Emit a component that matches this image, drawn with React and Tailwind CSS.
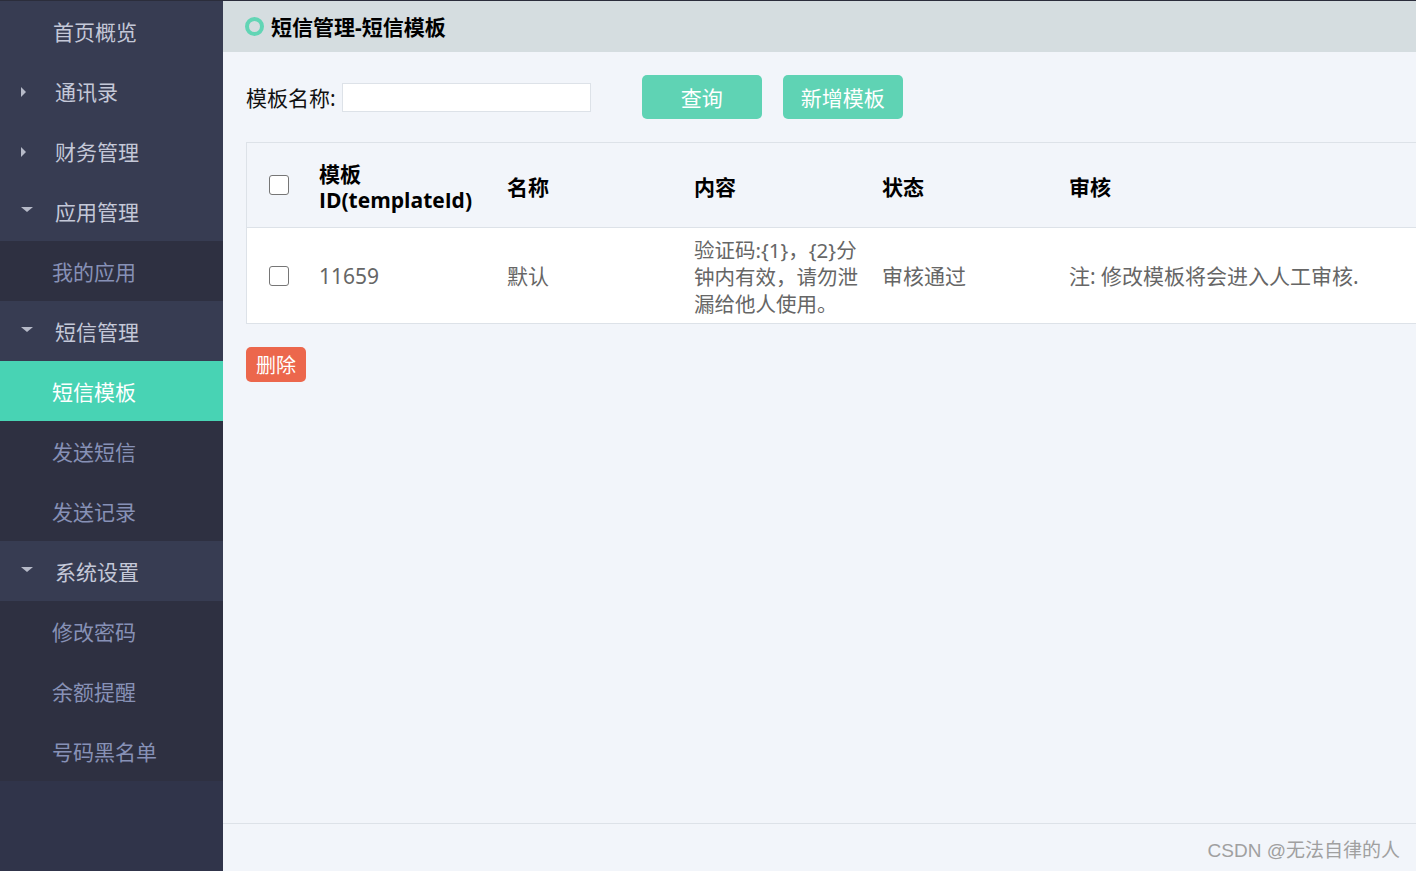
import React from "react";

const font = { fontFamily: '"Noto Sans", "Noto Sans CJK SC", sans-serif' };

const menu = [
  { label: "首页概览", type: "top" },
  { label: "通讯录", type: "top", arrow: "right" },
  { label: "财务管理", type: "top", arrow: "right" },
  { label: "应用管理", type: "top", arrow: "down" },
  { label: "我的应用", type: "sub" },
  { label: "短信管理", type: "top", arrow: "down" },
  { label: "短信模板", type: "sub", active: true },
  { label: "发送短信", type: "sub" },
  { label: "发送记录", type: "sub" },
  { label: "系统设置", type: "top", arrow: "down" },
  { label: "修改密码", type: "sub" },
  { label: "余额提醒", type: "sub" },
  { label: "号码黑名单", type: "sub" },
];

const Arrow = ({ dir }) =>
  dir === "right" ? (
    <svg width="12" height="12" viewBox="0 0 12 12" className="absolute left-[19px] top-[25px]">
      <path d="M2 1 L7 6 L2 11 Z" fill="#b6bac8" />
    </svg>
  ) : (
    <svg width="14" height="8" viewBox="0 0 14 8" className="absolute left-[20px] top-[25px]">
      <path d="M1 1 L13 1 L7 6 Z" fill="#b6bac8" />
    </svg>
  );

const MenuItem = ({ item }) => {
  let cls = "relative h-[60px] flex items-center text-[21px] ";
  if (item.active) cls += "bg-[#48d3b4] text-white pl-[52px]";
  else if (item.type === "sub") cls += "bg-[#2e3041] text-[#8791b6] pl-[52px]";
  else cls += `bg-[#373c52] text-[#c4c8d8] ${item.arrow ? "pl-[55px]" : "pl-[53px]"}`;
  return (
    <div className={cls}>
      {item.arrow && <Arrow dir={item.arrow} />}
      <span className="pt-[3px]">{item.label}</span>
    </div>
  );
};

const Check = () => (
  <div className="w-[20px] h-[20px] rounded-[3px] border-[1.5px] border-[#767676] bg-white" />
);

export default function App() {
  return (
    <div className="w-[1416px] h-[871px] flex flex-col overflow-hidden" style={font}>
      <div className="h-[1px] bg-[#2b2d3b] shrink-0" />
      <div className="flex flex-1 min-h-0">
        {/* Sidebar */}
        <div className="w-[223px] shrink-0 bg-[#30344a] flex flex-col">
          {menu.map((item) => (
            <MenuItem key={item.label} item={item} />
          ))}
        </div>

        {/* Main */}
        <div className="flex-1 flex flex-col bg-[#f2f5fa] min-w-0">
          <div className="h-[51px] bg-[#d5dde0] flex items-center pl-[22px] shrink-0">
            <div className="w-[19px] h-[19px] rounded-full border-[4px] border-[#62d5b5]" />
            <span className="ml-[7px] pt-[3px] text-[21px] font-bold text-black">短信管理-短信模板</span>
          </div>

          <div className="flex-1 pl-[23px]">
            <div className="flex items-center h-[44px] mt-[23px]">
              <span className="pt-[4px] text-[21px] text-[#111]">模板名称:</span>
              <input className="ml-[6px] w-[249px] h-[29px] bg-white border border-[#dde2e8] outline-none" />
              <button className="ml-[51px] w-[120px] h-[44px] pt-[3px] rounded-[5px] bg-[#5fd3b4] text-white text-[21px]">
                查询
              </button>
              <button className="ml-[21px] w-[120px] h-[44px] pt-[3px] rounded-[5px] bg-[#5fd3b4] text-white text-[21px]">
                新增模板
              </button>
            </div>

            <div className="mt-[23px] w-[1220px] border border-[#dde2e8]">
              <div className="grid grid-cols-[72px_188px_187px_188px_187px_1fr] h-[84px] items-center bg-[#f2f5fa] text-[21px] font-bold text-black leading-[26px]">
                <div className="pl-[22px]">
                  <Check />
                </div>
                <div className="pt-[3px]" style={{ fontFamily: '"Open Sans", "Noto Sans CJK SC", sans-serif' }}>
                  模板
                  <br />
                  ID(templateId)
                </div>
                <div className="pt-[3px]">名称</div>
                <div className="pt-[3px]">内容</div>
                <div className="pt-[3px]">状态</div>
                <div className="pt-[3px]">审核</div>
              </div>
              <div className="grid grid-cols-[72px_188px_187px_188px_187px_1fr] h-[96px] items-center bg-white border-t border-[#dde2e8] text-[21px] text-[#666]">
                <div className="pl-[22px]">
                  <Check />
                </div>
                <div className="pt-[2px]">11659</div>
                <div className="pt-[3px]">默认</div>
                <div className="pt-[3px] leading-[27px] text-[20.5px] whitespace-nowrap">
                  验证码:{"{1}"}，{"{2}"}分
                  <br />
                  钟内有效，请勿泄
                  <br />
                  漏给他人使用。
                </div>
                <div className="pt-[3px]">审核通过</div>
                <div className="pt-[3px]">注: 修改模板将会进入人工审核.</div>
              </div>
            </div>

            <button className="mt-[23px] w-[60px] h-[35px] pt-[3px] rounded-[5px] bg-[#ec674c] text-white text-[20px]">
              删除
            </button>
          </div>

          <div className="h-[48px] shrink-0 border-t border-[#dde2e8] flex items-center justify-end pr-[16px]">
            <span
              className="pt-[8px] text-[19px] text-[#a0a0a0]"
              style={{ fontFamily: '"Liberation Sans", "Noto Sans CJK SC", sans-serif' }}
            >
              CSDN @无法自律的人
            </span>
          </div>
        </div>
      </div>
    </div>
  );
}
